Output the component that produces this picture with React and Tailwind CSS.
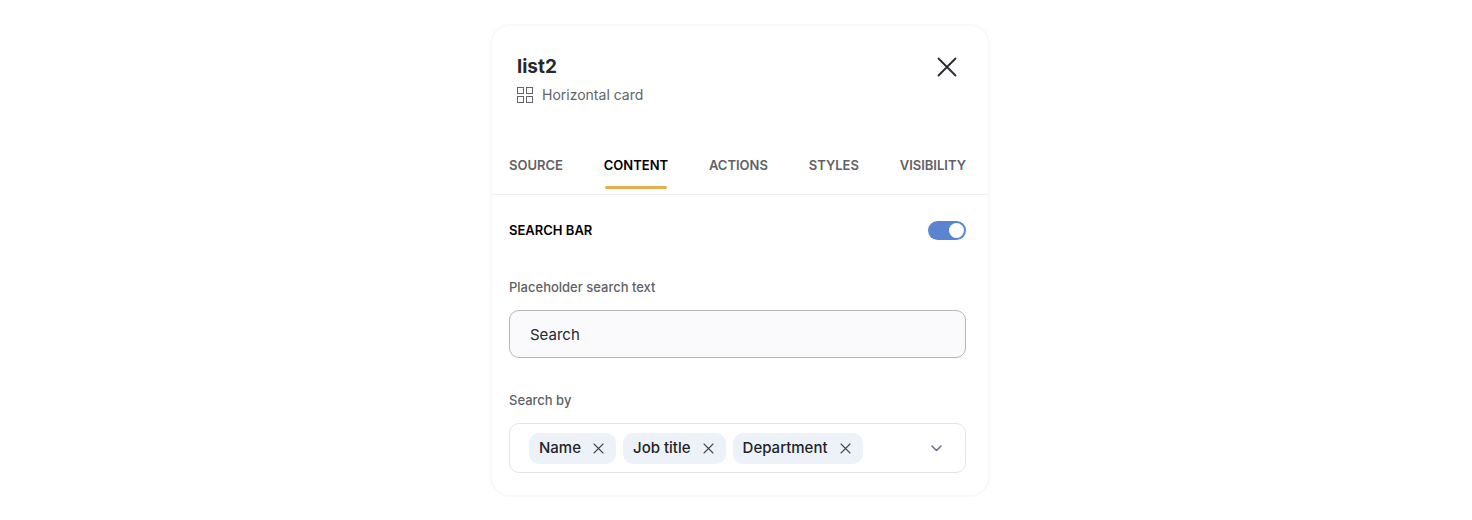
import { useState } from "react";

const TABS = ["SOURCE", "CONTENT", "ACTIONS", "STYLES", "VISIBILITY"];

function Cross({ className }) {
  return (
    <svg viewBox="0 0 20 20" fill="none" stroke="currentColor" strokeWidth="1.8" strokeLinecap="round" className={className} aria-hidden="true">
      <path d="M1.500 1.500l17 17M18.500 1.500l-17 17" />
    </svg>
  );
}

function GridIcon() {
  return (
    <svg viewBox="0 0 16 16" fill="none" stroke="currentColor" strokeWidth="1" className="size-4" aria-hidden="true">
      <rect x="0.5" y="0.5" width="6" height="6" />
      <rect x="9.5" y="0.5" width="6" height="6" />
      <rect x="0.5" y="9.5" width="6" height="6" />
      <rect x="9.5" y="9.5" width="6" height="6" />
    </svg>
  );
}

function Chip({ label, onRemove }) {
  return (
    <li className="flex h-[31px] items-center gap-3 rounded-[10px] bg-[#edf2f9] pr-3 pl-[10px] text-[15px] font-medium text-[#222427]">
      {label}
      <button type="button" aria-label={`Remove ${label}`} onClick={onRemove} className="text-[#45484d]">
        <svg viewBox="0 0 11 11" fill="none" stroke="currentColor" strokeWidth="1.1" strokeLinecap="round" className="size-[11px]" aria-hidden="true">
          <path d="M1 1l9 9M10 1l-9 9" />
        </svg>
      </button>
    </li>
  );
}

export default function App() {
  const [tab, setTab] = useState("CONTENT");
  const [enabled, setEnabled] = useState(true);
  const [text, setText] = useState("Search");
  const [fields, setFields] = useState(["Name", "Job title", "Department"]);

  return (
    <main className="flex justify-center bg-white py-6 pl-2 font-['Inter',sans-serif]">
      <section className="w-full max-w-[500px] rounded-[20px] border-2 border-[#f9f9f9] bg-white pb-[22px]">
        <header className="flex items-start justify-between pt-[27px] pr-[31px] pl-[25px]">
          <div>
            <h1 className="text-[19px] leading-7 font-bold text-[#25282c]">list2</h1>
            <p className="mt-1 flex items-center gap-[9px] text-sm leading-5 text-[#616469]">
              <GridIcon />
              Horizontal card
            </p>
          </div>
          <button type="button" aria-label="Close" className="mt-1 text-[#25282c]">
            <Cross className="size-5" />
          </button>
        </header>

        <div role="tablist" className="mt-[50px] flex justify-between border-b border-[#f0f0f1] pr-[22px] pl-[17px]">
          {TABS.map((name) => (
            <button
              key={name}
              type="button"
              role="tab"
              aria-selected={tab === name}
              onClick={() => setTab(name)}
              className={`flex flex-col text-[13px] leading-5 font-semibold ${tab === name ? "text-black" : "text-[#5f6166]"}`}
            >
              {name}
              <span className={`mx-px mt-[11px] mb-[5px] h-[3px] self-stretch rounded-full ${tab === name ? "bg-[#e6ad51]" : "bg-transparent"}`} />
            </button>
          ))}
        </div>

        <div className="pr-[22px] pl-[17px]">
          <div className="mt-[26px] flex h-[19px] items-center justify-between">
            <label htmlFor="search-bar" className="text-[13px] leading-[19px] font-semibold text-black">
              SEARCH BAR
            </label>
            <input
              id="search-bar"
              type="checkbox"
              role="switch"
              checked={enabled}
              onChange={(e) => setEnabled(e.target.checked)}
              className="flex h-[19px] w-[38px] appearance-none items-center rounded-full bg-[#c4c8cf] px-[2px] before:size-[15px] before:rounded-full before:bg-white checked:justify-end checked:bg-[#5a84cf]"
            />
          </div>

          <label htmlFor="placeholder-text" className="mt-[37px] block text-[13px] leading-5 font-medium text-[#5f6166]">
            Placeholder search text
          </label>
          <input
            id="placeholder-text"
            type="text"
            value={text}
            onChange={(e) => setText(e.target.value)}
            className="mt-[13px] block h-12 w-full rounded-[10px] border border-[#b5b5bc] bg-[#fafafc] px-5 text-[15px] text-[#25282c]"
          />

          <span id="search-by" className="mt-8 block text-[13px] leading-5 font-medium text-[#5f6166]">
            Search by
          </span>
          <div role="group" aria-labelledby="search-by" className="mt-[13px] flex h-[50px] items-center justify-between rounded-[10px] border border-[#e3e3e5] pr-[23px] pl-[19px]">
            <ul className="flex gap-[7px]">
              {fields.map((field) => (
                <Chip key={field} label={field} onRemove={() => setFields(fields.filter((f) => f !== field))} />
              ))}
            </ul>
            <button type="button" aria-label="Show options" className="text-[#6b7086]">
              <svg viewBox="0 0 11 7" fill="none" stroke="currentColor" strokeWidth="1.6" strokeLinecap="round" strokeLinejoin="round" className="h-[7px] w-[11px]" aria-hidden="true">
                <path d="M1 1l4.500 4.500L10 1" />
              </svg>
            </button>
          </div>
        </div>
      </section>
    </main>
  );
}
